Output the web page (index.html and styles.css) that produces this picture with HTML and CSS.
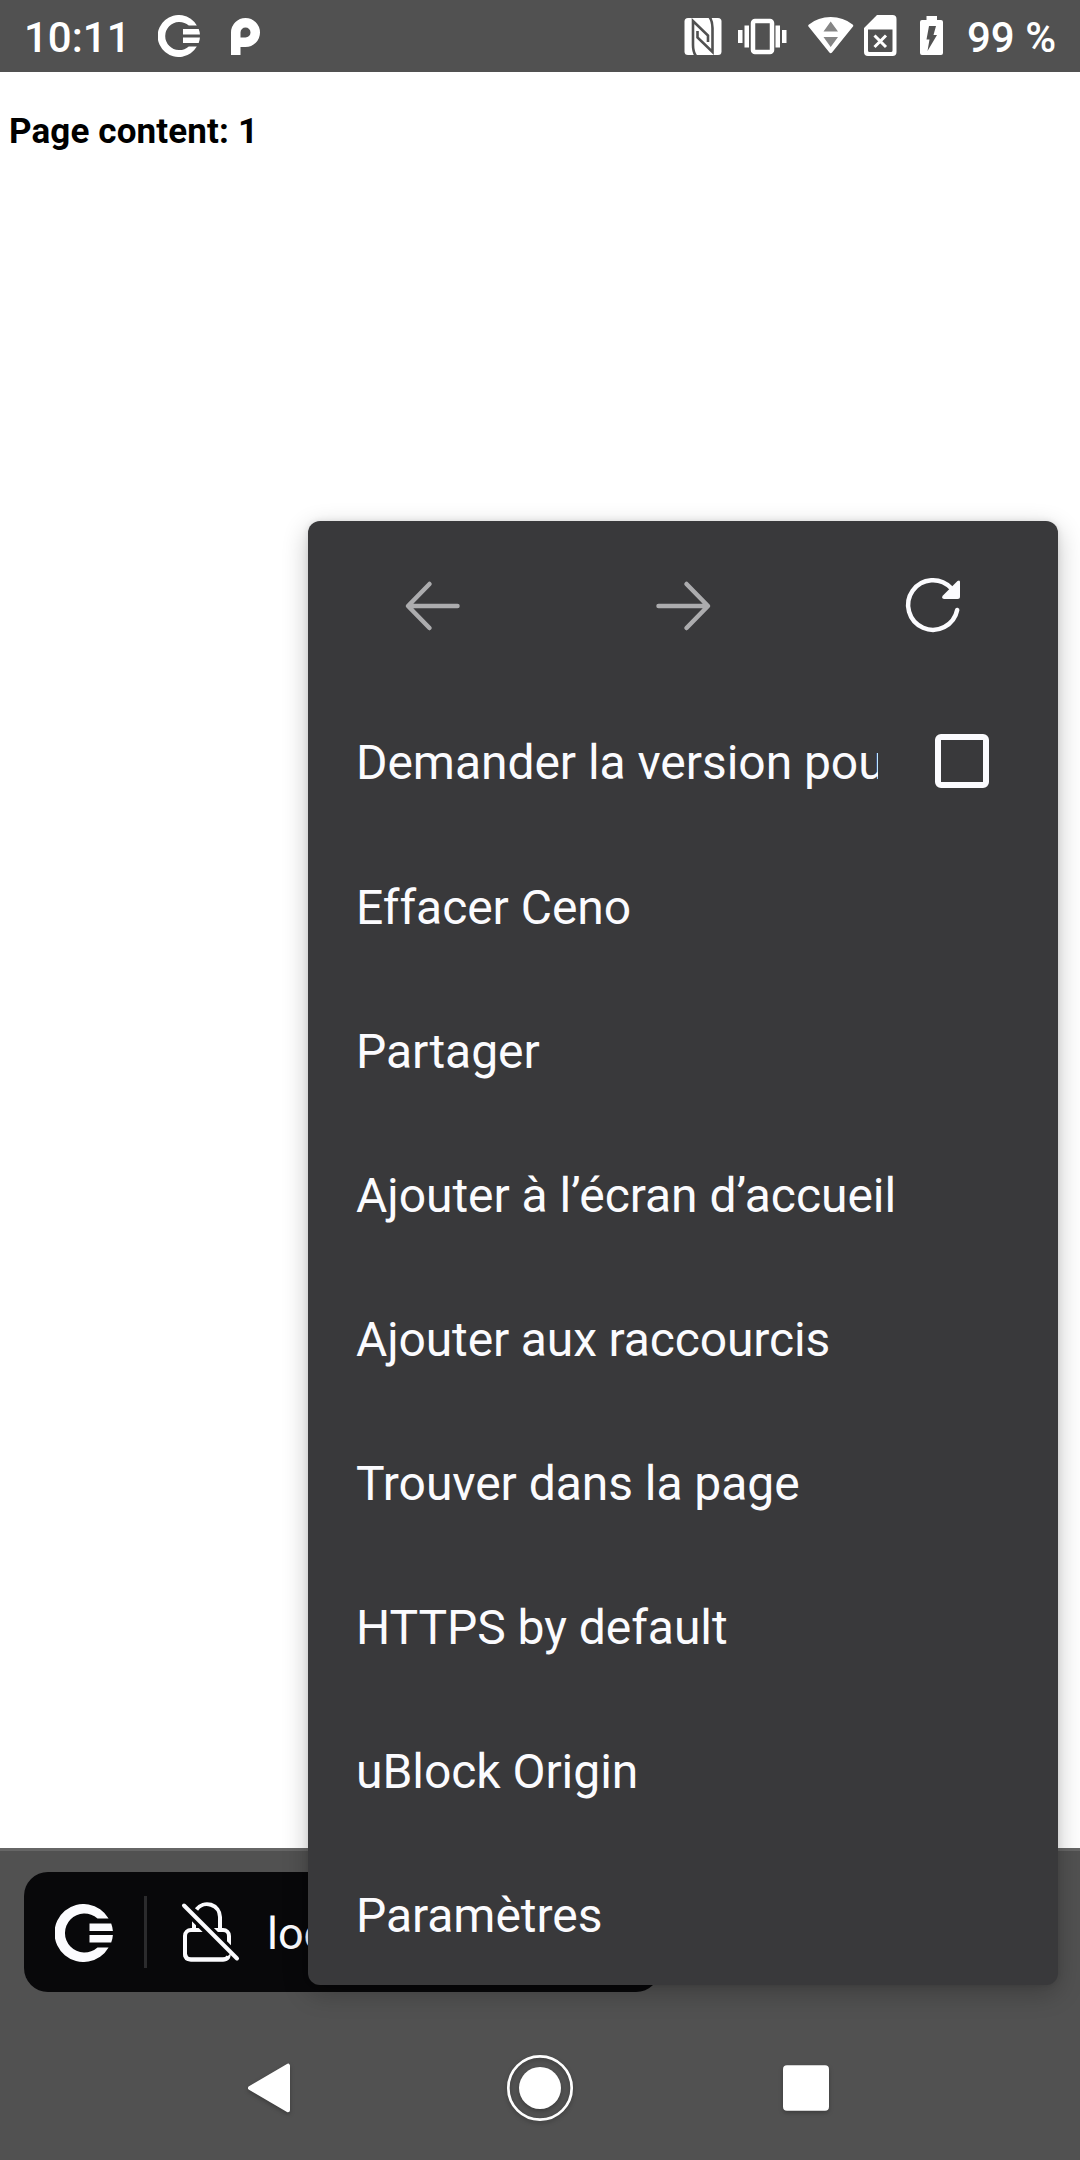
FILE: index.html
```html
<!DOCTYPE html>
<html lang="fr">
<head>
<meta charset="utf-8">
<title>Ceno</title>
<link rel="stylesheet" href="styles.css">
</head>
<body>
<div class="screen">
  <header class="status">
    <span class="clock">10:11</span>
    <svg class="st-ceno" width="42" height="42" viewBox="0 0 58 58" fill="#fff"><path d="M53.600 14.500A29 29 0 1 0 53.600 43.500H42.500A19.500 19.500 0 1 1 42.500 14.500Z"/><path d="M34.500 19.500H56.200Q57.600 23 57.900 27H34.500ZM34.500 31H57.900Q57.600 35 56.200 38.500H34.500Z"/></svg>
    <svg class="st-p" width="29" height="37" viewBox="0 0 29 37"><path fill="#fff" fill-rule="evenodd" d="M0 37V14.500A14.500 14.500 0 1 1 14.500 29H9.500V37ZM9.500 19.500H14.500A5 5 0 1 0 9.500 14.500Z"/></svg>
    <span class="spacer"></span>
    <svg class="st-nfc" width="38" height="38" viewBox="0 0 38 38"><rect x=".5" y="0" width="37" height="37" rx="3.500" fill="#fff"/><g fill="none" stroke="#515151" stroke-width="2.600"><path d="M12 38Q9 34 9 27V3L24 17.500V24"/><path d="M25.500 -1Q28.500 3 28.500 10V34L13.500 19.500V13"/></g></svg>
    <svg class="st-vib" width="49" height="37" viewBox="0 0 49 37"><g fill="#fff"><rect x="0" y="12" width="4.500" height="13"/><rect x="6.500" y="7.500" width="4.500" height="22"/><rect x="37.500" y="7.500" width="4.500" height="22"/><rect x="44" y="12" width="4.500" height="13"/></g><rect x="15" y="3" width="19" height="31" rx="2" fill="none" stroke="#fff" stroke-width="4.500"/></svg>
    <svg class="st-wifi" width="46" height="37" viewBox="0 0 46 37"><path fill="#fff" d="M.5 9.500Q-.3 8.500 1 7.500Q10 0 22.700 0T44.600 7.500Q45.700 8.500 45 9.500L24 35.500Q22.700 37 21.400 35.500Z"/><path fill="#858585" d="M15.500 14.500L22.700 4.500L30 14.500ZM15.500 20H30L22.700 30Z"/></svg>
    <svg class="st-sim" width="33" height="41" viewBox="0 0 33 41"><path fill="#fff" fill-rule="evenodd" d="M13 0H28.500Q32.500 0 32.500 4V37Q32.500 41 28.500 41H4Q0 41 0 37V13ZM4 14.500V35.500Q4 37 5.500 37H27Q28.500 37 28.500 35.500V14.500Z"/><path stroke="#fff" stroke-width="3" d="M10.500 20.500L22 32M22 20.500L10.500 32"/></svg>
    <svg class="st-bat" width="23" height="39" viewBox="0 0 23 39"><path fill="#fff" d="M6.500 0H17V4H21Q23 4 23 6V37Q23 39 21 39H2Q0 39 0 37V6Q0 4 2 4H6.500Z"/><path fill="#515151" d="M9 10H16L13.500 19H17L7.500 35L9.500 23.500H6.500Z"/></svg>
    <span class="percent">99 %</span>
  </header>

  <main class="page"><p class="page-text">Page content: 1</p></main>

  <div class="toolbar">
    <div class="url-bar">
      <svg class="brand" width="58" height="58" viewBox="0 0 58 58" fill="#fbfbfe"><path d="M53.600 14.500A29 29 0 1 0 53.600 43.500H42.500A19.500 19.500 0 1 1 42.500 14.500Z"/><path d="M34.500 19.500H56.200Q57.600 23 57.900 27H34.500ZM34.500 31H57.900Q57.600 35 56.200 38.500H34.500Z"/></svg>
      <span class="divider"></span>
      <svg class="lock" width="60" height="64" viewBox="0 0 60 64" fill="none" stroke="#fbfbfe" stroke-width="4"><path d="M13 30V17M15.500 9.500A13 13 0 0 1 39 17V30"/><rect x="4" y="30" width="44" height="29.500" rx="6"/><path stroke="#08080a" stroke-width="11" d="M4.500 7L50 53"/><path d="M4 44V53.500Q4 59.500 10 59.500H42Q46 59.500 47.500 56.500"/><path stroke-linecap="round" d="M3 5.500L56 58.500"/></svg>
      <span class="url">localhost</span>
    </div>
  </div>

  <nav class="navbar">
    <svg class="back" width="66" height="72" viewBox="0 0 66 72"><path fill="#fff" stroke="#fff" stroke-width="4" stroke-linejoin="round" d="M14 36L52 13.700V58.300Z"/></svg>
    <svg width="68" height="72" viewBox="0 0 68 72"><circle cx="34" cy="36" r="31.700" fill="none" stroke="#fff" stroke-width="2.700"/><circle cx="34" cy="36" r="21" fill="#fff"/></svg>
    <svg class="recents" width="66" height="72" viewBox="0 0 66 72"><rect x="10" y="13.300" width="46" height="45.500" rx="4" fill="#fff"/></svg>
  </nav>

  <div class="menu">
    <div class="menu-nav">
      <svg width="60" height="60" viewBox="0 0 60 60" fill="none" stroke="#acacae" stroke-width="4.500" stroke-linecap="round" stroke-linejoin="round"><path d="M54.500 31H5.500M26.500 9L5 31L26.500 53"/></svg>
      <svg width="60" height="60" viewBox="0 0 60 60" fill="none" stroke="#acacae" stroke-width="4.500" stroke-linecap="round" stroke-linejoin="round"><path d="M5.500 31H54.500M33.500 9L55 31L33.500 53"/></svg>
      <svg width="60" height="60" viewBox="0 0 60 60"><path fill="none" stroke="#fbfbfe" stroke-width="4.500" stroke-linecap="round" d="M54.200 35A24.800 24.800 0 1 1 48 13"/><path fill="#fbfbfe" d="M39.700 20.800L54.500 6Q57 4.500 57 7V21.500Q57 24 54.500 24H41Q38 23.500 39.700 20.800Z"/></svg>
    </div>
    <div class="item"><span class="label clipped">Demander la version pour ordinateur</span><span class="checkbox"></span></div>
    <div class="item"><span class="label">Effacer Ceno</span></div>
    <div class="item"><span class="label">Partager</span></div>
    <div class="item"><span class="label">Ajouter à l’écran d’accueil</span></div>
    <div class="item"><span class="label tight">Ajouter aux raccourcis</span></div>
    <div class="item"><span class="label">Trouver dans la page</span></div>
    <div class="item"><span class="label">HTTPS by default</span></div>
    <div class="item"><span class="label">uBlock Origin</span></div>
    <div class="item"><span class="label">Paramètres</span></div>
  </div>
</div>
</body>
</html>
```
FILE: styles.css
```css
* { box-sizing: border-box; }
body { margin: 0; font-family: Roboto, sans-serif; background: #fff; }
svg { display: block; flex: none; }
.screen { position: relative; width: 1080px; height: 2160px; overflow: hidden; display: flex; flex-direction: column; }

.status { height: 72px; flex: none; display: flex; align-items: flex-start; background: #515151; color: #fff; padding: 0 24px 0 24px; font-size: 42px; font-weight: 500; }
.clock, .percent { line-height: 72px; padding-top: 2px; white-space: nowrap; }
.clock { width: 134px; }
.percent { width: 89px; }
.spacer { flex: 1; }
.st-ceno { margin-top: 15px; }
.st-p { margin: 18px 0 0 31px; }
.st-nfc { margin: 18px 16px 0 0; }
.st-vib { margin: 18px 21px 0 0; }
.st-wifi { margin: 17px 10px 0 0; }
.st-sim { margin: 15px 23px 0 0; }
.st-bat { margin: 16px 24px 0 0; }

.page { flex: 1; padding: 38px 9px; }
.page-text { margin: 0; font-size: 35px; line-height: 44px; letter-spacing: .13px; font-weight: 700; color: #000; }

.toolbar { height: 168px; flex: none; background: #515151; border-top: 3px solid #666; padding: 21px 24px 0; }
.url-bar { width: 636px; height: 120px; border-radius: 24px; background: #08080a; color: #fbfbfe; display: flex; align-items: center; padding-left: 31px; overflow: hidden; }
.brand { margin-top: 1px; }
.divider { width: 3px; height: 72px; background: #2b2b2d; margin-left: 31px; }
.lock { margin-left: 34px; }
.url { margin-left: 26px; padding-top: 3px; font-size: 45px; line-height: 60px; }

.navbar { height: 144px; flex: none; background: #515151; display: flex; justify-content: center; align-items: center; gap: 200px; }
.navbar svg { filter: drop-shadow(0 2px 2px rgba(0, 0, 0, .25)); }
.navbar .back { margin: 0 4px 0 -4px; }
.navbar .recents { margin: 0 1px 0 -1px; }

.menu { position: absolute; left: 308px; top: 521px; width: 750px; height: 1464px; border-radius: 12px; background: #39393b; color: #fbfbfe; box-shadow: 0 8px 26px rgba(0, 0, 0, .24), 0 0 6px rgba(0, 0, 0, .1); }
.menu-nav { height: 168px; display: grid; grid-template-columns: repeat(3, 1fr); align-items: center; justify-items: center; }
.item { height: 144px; display: flex; align-items: center; justify-content: space-between; padding: 0 69px 0 48px; }
.label { font-size: 48px; line-height: 64px; letter-spacing: -.05px; padding-top: 6px; white-space: nowrap; }
.tight { letter-spacing: -.14px; }
.clipped { width: 522px; padding-top: 4px; overflow: hidden; }
.checkbox { width: 54px; height: 54px; border: 6px solid #fbfbfe; border-radius: 6px; }
```
